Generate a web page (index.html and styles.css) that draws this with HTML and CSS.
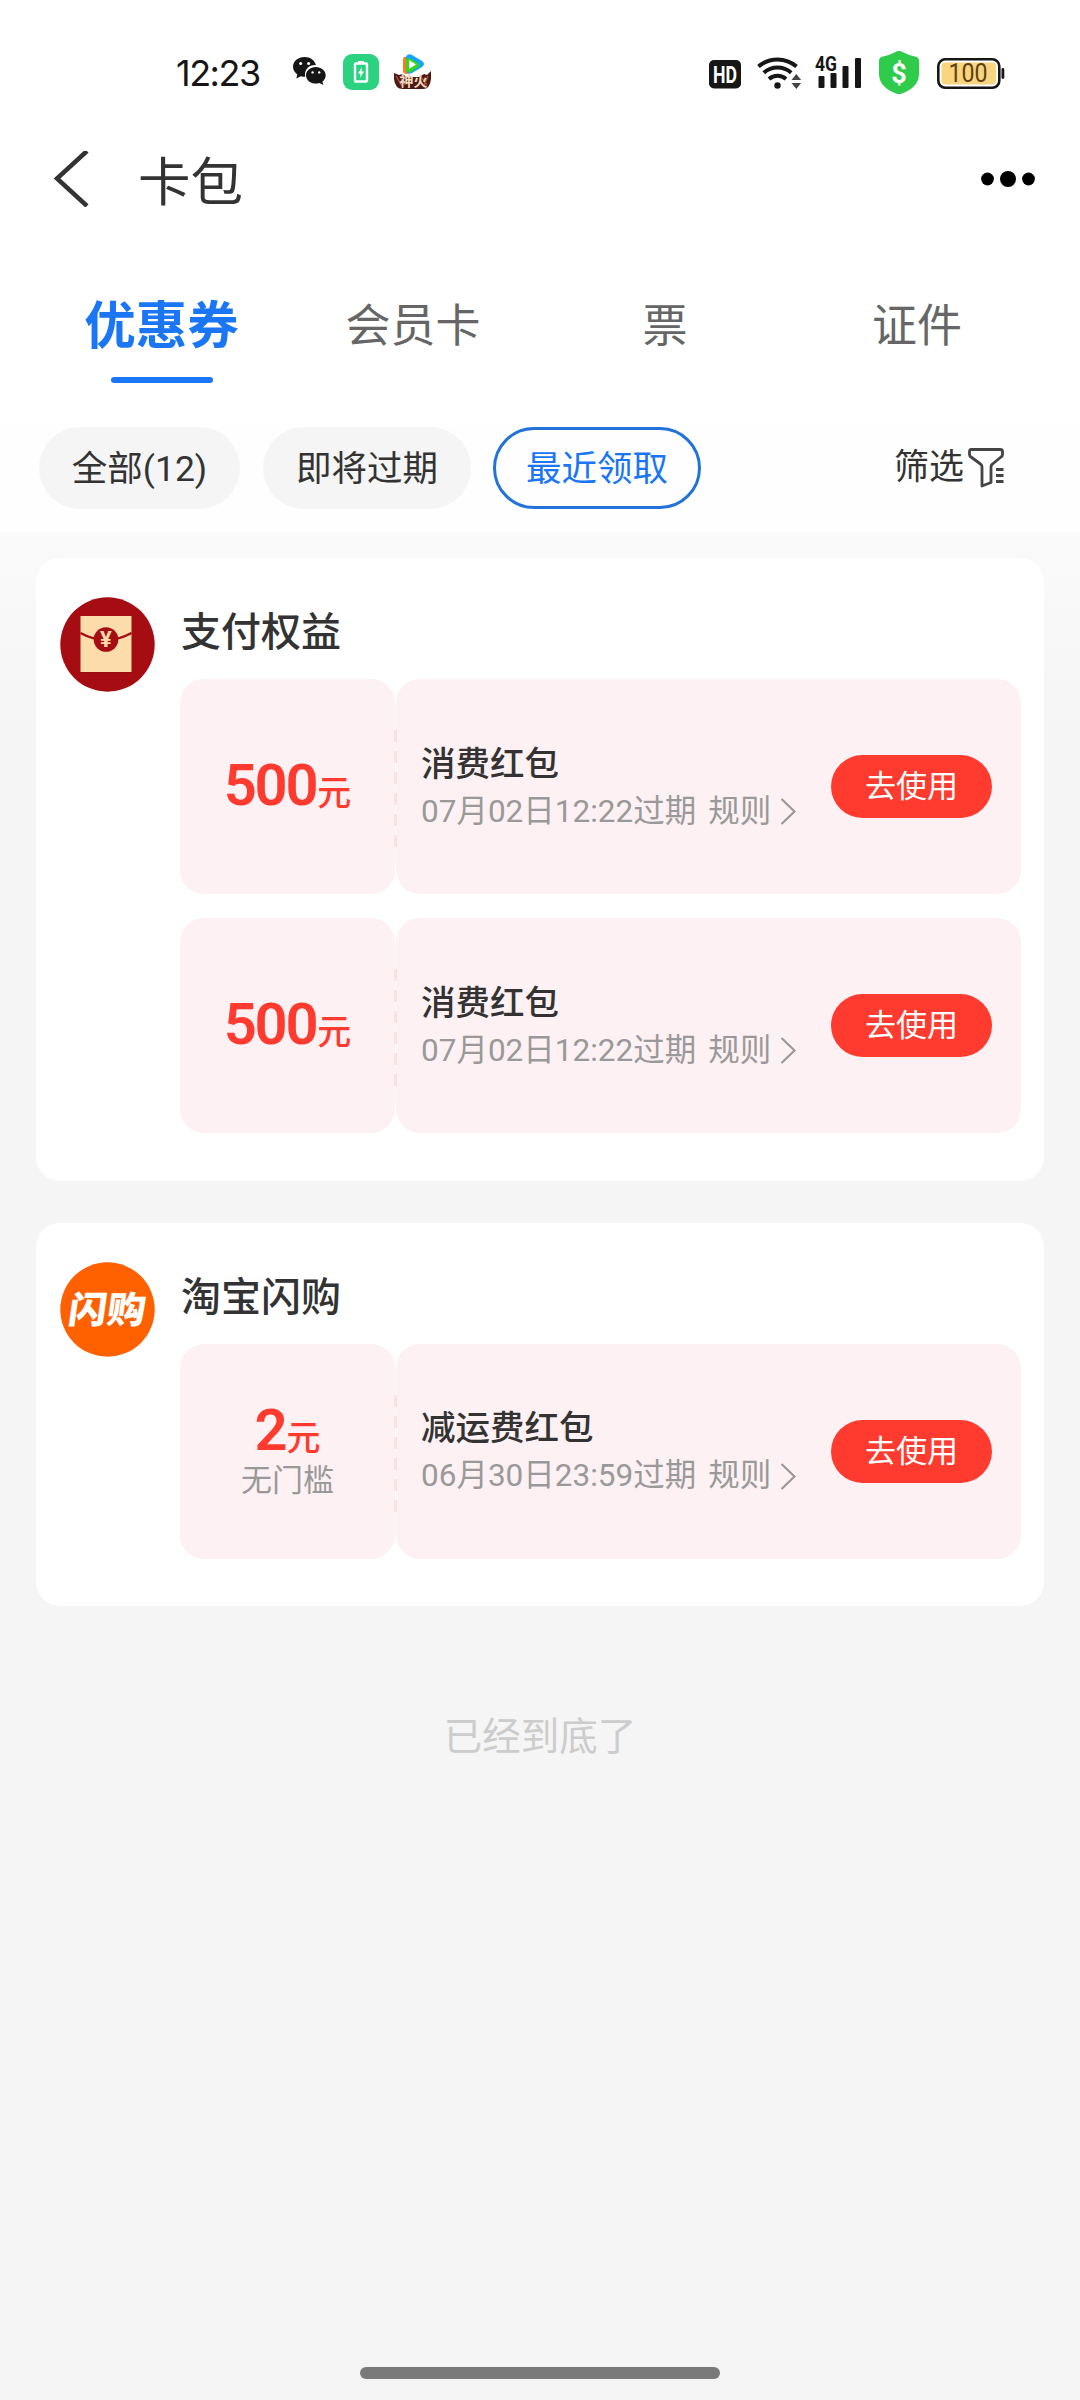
FILE: index.html
```html
<!DOCTYPE html>
<html lang="zh-CN">
<head>
<meta charset="utf-8">
<title>卡包</title>
<link rel="stylesheet" href="styles.css">
</head>
<body>
<div class="screen">
  <header class="status">
    <span class="clock">12:23</span>
    <svg class="ic-wechat" width="34" height="30" viewBox="0 0 34 30">
      <path fill="#161616" d="M11.500 0C5 0 0 4.300 0 9.800c0 3.200 1.700 5.800 4.300 7.600L3.300 21.500l4.600-2.300c1.600.4 2.600.5 4.300.5A9.500 9.500 0 0 1 22.900 8.200C22 3.400 17.200 0 11.500 0z"/>
      <path fill="#161616" d="M32.700 18.200c0-4.600-4.500-8.300-9.800-8.300-5.600 0-9.900 3.700-9.900 8.300s4.300 8.400 9.900 8.400c1.200 0 2.400-.3 3.500-.6l4 2-1-3.300c2-1.600 3.300-3.900 3.300-6.500z"/>
      <g fill="#fff"><circle cx="7.700" cy="6.600" r="1.500"/><circle cx="15.600" cy="6.600" r="1.500"/><circle cx="19.600" cy="15.400" r="1.200"/><circle cx="26.200" cy="15.400" r="1.200"/></g>
    </svg>
    <svg class="ic-charge" width="36" height="36" viewBox="0 0 36 36">
      <rect width="36" height="36" rx="9" fill="#2bd27f"/>
      <rect x="12" y="9.500" width="12" height="18" rx="1" fill="none" stroke="#fff" stroke-width="2.400"/>
      <path fill="#fff" d="M15 7h6v2.500h-6zM19 13l-4 6.500h2.500L17 24l4-6.500h-2.500z"/>
    </svg>
    <svg class="ic-video" width="38" height="36" viewBox="0 0 38 36">
      <path d="M0 19l5 2 3-1 5 3h12l5-3 3 1 4-4v8q-1 10-8 10H9Q1 35 0 25z" fill="#4b1a14"/>
      <path d="M2 22l6 10M6 22l5 9M28 24l5 7M34 22l-4 9" stroke="#a04e34" stroke-width="1.500"/>
      <path d="M9 6q0-4 4-3l4 1v15l-4 1q-4 0-4-3z" fill="#ff7a1c"/>
      <path d="M12 3q1-4 6-2l10 6q4 3 0 6l-10 6q-5 2-6-3z" fill="#12a5ff"/>
      <path d="M12 6q1-3 5-1l7 4q3 2 0 4l-7 5q-5 1-5-3z" fill="#35d61e"/>
      <path d="M15 6l7 4.500-7 4.500z" fill="#fff"/>
      <text x="19.500" y="31.500" class="badge-text">神火</text>
    </svg>
    <svg class="ic-right" width="300" height="46" viewBox="706 48 300 46">
      <rect x="709" y="59" width="32" height="28.500" rx="5" fill="#161616"/>
      <text x="725" y="81.500" class="hd" textLength="24" lengthAdjust="spacingAndGlyphs">HD</text>
      <g fill="none" stroke="#161616" stroke-width="4">
        <path d="M758.500 65.500a29 29 0 0 1 38 0"/><path d="M763.800 71.700a21 21 0 0 1 27.400 0"/><path d="M769 78a13 13 0 0 1 17 0"/>
      </g>
      <circle cx="777.500" cy="84.500" r="3.200" fill="#161616"/>
      <path d="M791.500 79l4.800-6 4.800 6zM791.500 82l4.800 6 4.800-6z" fill="#444"/>
      <text x="815" y="70" class="net" textLength="22" lengthAdjust="spacingAndGlyphs">4G</text>
      <g fill="#161616"><rect x="818.500" y="75" width="6" height="12" rx="1"/><rect x="830.500" y="72" width="6" height="15" rx="1"/><rect x="842.500" y="65" width="6" height="22" rx="1"/><rect x="855" y="57" width="6" height="30" rx="1"/></g>
      <path d="M899 50q2 0 4 1.300Q909 54.500 915 55.500q4 .6 4 4.500v13q0 13-17 19.500-3 1.200-6 0-17-6.500-17-19.500V60q0-3.900 4-4.500 6-1 12-4.200 2-1.300 4-1.300z" fill="#2fcb4b"/>
      <text x="899" y="81.500" class="dollar">$</text>
      <rect x="938.300" y="58.300" width="61" height="28.500" rx="7" fill="#fff" stroke="#161616" stroke-width="2.600"/>
      <rect x="941.500" y="61.500" width="54.500" height="22" rx="4" fill="#fbd47f"/>
      <rect x="1001.500" y="67" width="2.800" height="11" rx="1.400" fill="#161616"/>
      <text x="968" y="81" class="batt" textLength="39" lengthAdjust="spacingAndGlyphs">100</text>
    </svg>
  </header>

  <div class="navbar">
    <svg class="back" width="36" height="56" viewBox="0 0 36 56"><path d="M34 0L4 27.500 34 55" fill="none" stroke="#333" stroke-width="4.500"/></svg>
    <h1 class="title">卡包</h1>
    <svg class="more" width="56" height="16" viewBox="0 0 56 16"><circle cx="7.500" cy="8" r="6.400"/><circle cx="28" cy="8" r="8"/><circle cx="48.500" cy="8" r="6.400"/></svg>
  </div>

  <nav class="tabs">
    <a class="tab active">优惠券</a>
    <a class="tab">会员卡</a>
    <a class="tab">票</a>
    <a class="tab">证件</a>
  </nav>

  <div class="filters">
    <span class="chip chip-all">全部(12)</span>
    <span class="chip">即将过期</span>
    <span class="chip chip-on">最近领取</span>
    <span class="sift">筛选
      <svg width="36" height="40" viewBox="0 0 36 40" fill="none" stroke="#444"><path stroke-width="2.800" stroke-linejoin="round" d="M3 1.500h29q2.500 0 2.500 2v3q0 1.500-1.500 2.500l-8.500 7q-1.500 1-1.500 3v15.500l-9 3.500V19q0-2-1.500-3L3 9Q1.500 8 1.500 6.500v-3q0-2 1.500-2z"/><path stroke-width="2.800" d="M28 21.500h7.500M28 27.500h7.500M28 33.500h7.500"/></svg>
    </span>
  </div>

  <main class="list">
    <section class="card">
      <svg class="avatar" width="95" height="95" viewBox="0 0 95 95">
        <circle cx="47.500" cy="47.500" r="47.200" fill="#a50d13"/>
        <rect x="21" y="20" width="51" height="56" fill="#8a0a10" opacity=".5"/>
        <rect x="20.500" y="19" width="51" height="56" fill="#fcdcaa"/>
        <path d="M20.500 36Q46 50 71.500 36" fill="none" stroke="#a50d13" stroke-width="2.500"/>
        <circle cx="46" cy="42.500" r="12.300" fill="#a50d13"/>
        <text x="46" y="50" class="yen">¥</text>
      </svg>
      <div class="body">
        <h2 class="shop">支付权益</h2>
        <div class="coupon">
          <div class="amount"><div class="price"><b>500</b>元</div></div>
          <div class="detail">
            <div class="info"><div class="name">消费红包</div><div class="meta"><span>07月02日12:22过期</span><span>规则</span><svg class="arrow" width="17" height="27" viewBox="0 0 17 27"><path d="M1.500 1l13 12.500-13 12.500"/></svg></div></div>
            <a class="use">去使用</a>
          </div>
        </div>
        <div class="coupon">
          <div class="amount"><div class="price"><b>500</b>元</div></div>
          <div class="detail">
            <div class="info"><div class="name">消费红包</div><div class="meta"><span>07月02日12:22过期</span><span>规则</span><svg class="arrow" width="17" height="27" viewBox="0 0 17 27"><path d="M1.500 1l13 12.500-13 12.500"/></svg></div></div>
            <a class="use">去使用</a>
          </div>
        </div>
      </div>
    </section>

    <section class="card">
      <svg class="avatar" width="95" height="95" viewBox="0 0 95 95">
        <circle cx="47.500" cy="47.500" r="47.200" fill="#ff6000"/>
        <text x="0" y="0" class="flash" transform="translate(45.500 61) skewX(-8)" textLength="77" lengthAdjust="spacingAndGlyphs">闪购</text>
      </svg>
      <div class="body">
        <h2 class="shop">淘宝闪购</h2>
        <div class="coupon">
          <div class="amount"><div class="price"><b>2</b>元</div><div class="cond">无门槛</div></div>
          <div class="detail">
            <div class="info"><div class="name">减运费红包</div><div class="meta"><span>06月30日23:59过期</span><span>规则</span><svg class="arrow" width="17" height="27" viewBox="0 0 17 27"><path d="M1.500 1l13 12.500-13 12.500"/></svg></div></div>
            <a class="use">去使用</a>
          </div>
        </div>
      </div>
    </section>
    <p class="end">已经到底了</p>
  </main>
  <div class="home"></div>
</div>
</body>
</html>
```
FILE: styles.css
```css
* { box-sizing: border-box; margin: 0; padding: 0; }
body {
  font-family: Roboto, "Noto Sans CJK SC", sans-serif;
  color: #333;
  background: #f5f5f5;
}
svg { display: block; flex: none; }
.screen {
  width: 1080px;
  height: 2400px;
  display: flex;
  flex-direction: column;
  background: linear-gradient(#fff 0, #fff 420px, #fafafa 540px, #f5f5f5 750px);
}

/* status bar */
.status { display: flex; align-items: center; height: 144px; padding: 0 74px 0 176px; }
.clock { width: 117px; padding-top: 2px; font: 400 36px/48px Inter, sans-serif; letter-spacing: -1.500px; color: #161616; }
.ic-charge { margin-left: 16px; }
.ic-video { margin-left: 15px; }
.ic-right { margin-left: auto; }
.status text { text-anchor: middle; }
.badge-text { font: 700 14px "Noto Sans CJK SC", sans-serif; fill: #f5d9c0; }
.hd { font: 700 23px Roboto, sans-serif; fill: #fff; }
.status .net { font: 700 21px Roboto, sans-serif; fill: #161616; text-anchor: start; }
.dollar { font: 700 27px Roboto, sans-serif; fill: #fff; }
.batt { font: 400 25px Roboto, sans-serif; fill: #5a4210; }

/* title */
.navbar { display: flex; align-items: center; height: 70px; padding: 0 44px 0 53px; }
.title { margin-left: 49px; padding-top: 7px; font-size: 52.500px; line-height: 70px; font-weight: 400; }
.more { margin-left: auto; }

/* tabs */
.tabs { display: flex; height: 213px; padding: 74px 37px 0 35px; }
.tab { width: 252px; height: 97px; line-height: 78px; font-size: 45px; text-align: center; color: #666; }
.tab.active { padding-left: 1px; line-height: 77px; font-size: 51.500px; font-weight: 700; color: #1a76f5; }
.tab.active::after { content: ""; display: block; width: 102px; height: 6px; margin: 12px auto 0; border-radius: 3px; background: #1a76f5; }

/* filter chips */
.filters { display: flex; align-items: center; height: 105px; padding: 0 76px 23px 39px; background: #fefefe; }
.chip { height: 82px; width: 208px; margin-right: 22px; border-radius: 41px; background: #f5f5f5; font-size: 35.500px; line-height: 84px; text-align: center; }
.chip-all { width: 201px; margin-right: 23px; }
.chip-on { border: 3px solid #2272da; background: none; color: #1a76f5; line-height: 78px; margin-right: 0; }
.sift { display: flex; align-items: center; gap: 4px; margin-left: auto; font-size: 35px; line-height: 84px; }

/* coupon cards */
.list { padding: 26px 36px 0; flex: 1; }
.card { display: flex; gap: 25px; padding: 39px 23px 47.500px 24px; margin-bottom: 42px; border-radius: 24px; background: #fff; }
.body { flex: 1; }
.shop { height: 82px; padding: 1px 0 0 1px; font-size: 40px; line-height: 69px; font-weight: 500; }
.coupon { position: relative; display: flex; height: 215px; }
.coupon + .coupon { margin-top: 24px; }
.coupon::after {
  content: "";
  position: absolute;
  left: 214px;
  top: 51px;
  width: 3px;
  height: 117px;
  background: repeating-linear-gradient(#fae2e4 0 12px, transparent 12px 21px);
}
.amount, .detail { border-radius: 24px; background: #fef1f3; }
.amount { display: flex; flex-direction: column; align-items: center; justify-content: center; width: 215px; margin-right: 1px; padding-top: 5px; color: #ff3b30; }
.price { display: flex; align-items: baseline; gap: 1px; font-size: 34px; line-height: 50px; font-weight: 500; }
.price b { font: 600 58px/50px Roboto, sans-serif; letter-spacing: -2.300px; }
.cond { margin-top: -3px; font-size: 31px; line-height: 42px; color: #999; }
.detail { flex: 1; display: flex; align-items: center; justify-content: space-between; padding: 0 29px 0 25px; }
.info { padding-top: 2px; }
.name { font-size: 34.500px; line-height: 48px; font-weight: 500; }
.meta { display: flex; align-items: center; font-size: 31.500px; line-height: 48px; color: #999; }
.meta span + span { margin-left: 12px; }
.arrow { margin-left: 9px; fill: none; stroke: #999; stroke-width: 2.200; }
.use { width: 161px; height: 63px; border-radius: 32px; background: #ff3b30; color: #fff; font-size: 31px; line-height: 64px; text-align: center; }
.yen { font: 700 22px Roboto, sans-serif; fill: #fcdcaa; text-anchor: middle; }
.flash { font: 900 37px "Noto Sans CJK SC", sans-serif; fill: #fff; text-anchor: middle; }
.end { margin-top: 101px; font-size: 38.500px; line-height: 60px; text-align: center; color: #ccc; }
.home { width: 360px; height: 12px; margin: 0 auto 21px; border-radius: 6px; background: #7a7a7a; }
```
